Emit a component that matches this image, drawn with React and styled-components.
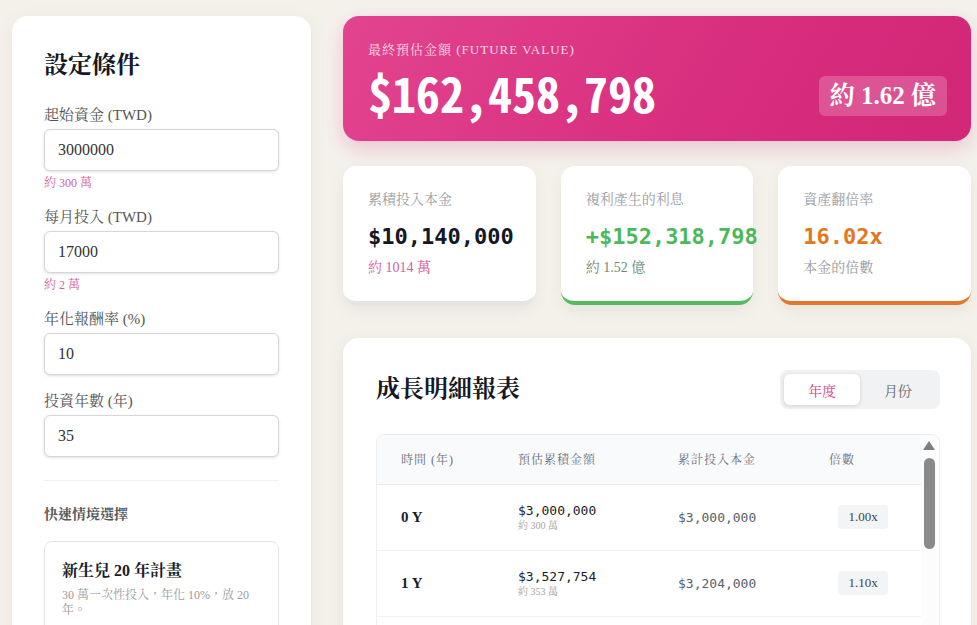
import styled, { createGlobalStyle } from "styled-components";

const GlobalStyle = createGlobalStyle`
  html, body {
    margin: 0;
    padding: 0;
    height: 100%;
    overflow: hidden;
    background: #f4f1eb;
  }
  body {
    font-family: "Liberation Serif", "Noto Serif CJK TC", "Noto Sans CJK TC", serif;
    color: #1f2330;
  }
  * { box-sizing: border-box; }
`;

const mono = `"DejaVu Sans Mono", "Liberation Mono", monospace`;

const fields = [
  { label: "起始資金 (TWD)", value: "3000000", hint: "約 300 萬" },
  { label: "每月投入 (TWD)", value: "17000", hint: "約 2 萬" },
  { label: "年化報酬率 (%)", value: "10" },
  { label: "投資年數 (年)", value: "35" },
];

const scenarios = [
  { title: "新生兒 20 年計畫", desc: "30 萬一次性投入，年化 10%，放 20 年。" },
  { title: "小資族定期定額", desc: "每月 1 萬，年化 8%，持續 30 年。" },
];

const stats = [
  { label: "累積投入本金", value: "$10,140,000", sub: "約 1014 萬", tone: "plain" },
  { label: "複利產生的利息", value: "+$152,318,798", sub: "約 1.52 億", tone: "green" },
  { label: "資產翻倍率", value: "16.02x", sub: "本金的倍數", tone: "orange" },
];

const tones = {
  plain: { value: "#141824", sub: "#d2609a", border: "#e4e4e6" },
  green: { value: "#4cb85c", sub: "#6b8a6e", border: "#55bb62" },
  orange: { value: "#e2771f", sub: "#9a9a9a", border: "#e4772a" },
};

// yearly rows: 3,000,000 start, 17,000 / month, 10% annual
const buildRows = () => {
  const rows = [];
  let value = 3000000;
  let principal = 3000000;
  const r = 0.1 / 12;
  for (let y = 0; y <= 35; y++) {
    if (y > 0) {
      for (let m = 0; m < 12; m++) {
        value = value * (1 + r) + 17000;
        principal += 17000;
      }
    }
    rows.push({ year: y, value, principal });
  }
  rows[1].value = 3527754;
  return rows;
};

const fmt = (n) => "$" + Math.round(n).toLocaleString("en-US");
const wan = (n) =>
  n >= 1e8 ? `約 ${(n / 1e8).toFixed(2)} 億` : `約 ${Math.round(n / 1e4)} 萬`;

const Page = styled.div`
  display: grid;
  grid-template-columns: 299px 1fr;
  gap: 32px;
  padding: 16px 6px 0 12px;
  height: 100vh;
  overflow: hidden;
`;

const Panel = styled.aside`
  background: #fff;
  border-radius: 16px;
  padding: 33px 32px 40px 32px;
  box-shadow: 0 4px 18px rgba(120, 100, 70, 0.08);
  min-height: 800px;
`;

const PanelTitle = styled.h2`
  margin: 0 0 24px;
  font-size: 24px;
  line-height: 32px;
  font-weight: 700;
  color: #151925;
`;

const Field = styled.div`
  display: flex;
  flex-direction: column;
  margin-bottom: 16px;
`;

const Label = styled.label`
  font-size: 15px;
  line-height: 20px;
  color: #555;
  margin-bottom: 4px;
`;

const Input = styled.input`
  height: 42px;
  border: 1px solid #d6d6d6;
  border-radius: 6px;
  padding: 0 13px;
  font-family: inherit;
  font-size: 16px;
  color: #333;
  background: #fff;
  box-shadow: 0 1px 3px rgba(0, 0, 0, 0.12);
  outline: none;
`;

const Hint = styled.div`
  margin-top: 4px;
  font-size: 12px;
  line-height: 16px;
  color: #d2609a;
`;

const Divider = styled.hr`
  border: none;
  border-top: 1px solid #efefef;
  margin: 23px 0 24px;
`;

const SectionLabel = styled.div`
  font-size: 14px;
  line-height: 20px;
  font-weight: 700;
  color: #555;
  margin-bottom: 16px;
`;

const ScenarioCard = styled.div`
  border: 1px solid #e6e6e6;
  border-radius: 8px;
  padding: 18px 17px 16px;
  margin-bottom: 12px;
  box-shadow: 0 1px 2px rgba(0, 0, 0, 0.04);
`;

const ScenarioTitle = styled.div`
  font-size: 16px;
  line-height: 22px;
  font-weight: 700;
  color: #1a1d28;
`;

const ScenarioDesc = styled.div`
  margin-top: 6px;
  font-size: 12px;
  line-height: 15px;
  color: #9a9a9a;
`;

const Main = styled.main`
  display: flex;
  flex-direction: column;
  min-width: 0;
`;

const Hero = styled.section`
  border-radius: 16px;
  padding: 25px 24px 22px 25px;
  background: linear-gradient(120deg, #e2448f 0%, #d92f80 55%, #d22677 100%);
  color: #fff;
  box-shadow: 0 8px 20px rgba(214, 44, 122, 0.22);
`;

const HeroLabel = styled.div`
  font-size: 13px;
  line-height: 18px;
  letter-spacing: 1px;
  color: rgba(255, 255, 255, 0.82);
  margin-bottom: 6px;
`;

const HeroRow = styled.div`
  display: flex;
  align-items: center;
  justify-content: space-between;
`;

const HeroValue = styled.div`
  font-family: "Noto Sans Mono CJK TC", "Noto Sans Mono CJK SC", "DejaVu Sans Mono", monospace;
  font-size: 48px;
  line-height: 54px;
  font-weight: 700;
`;

const HeroBadge = styled.div`
  margin-top: 8px;
  padding: 5px 11px;
  border-radius: 6px;
  background: rgba(255, 255, 255, 0.2);
  font-size: 25px;
  line-height: 30px;
  font-weight: 700;
`;

const StatGrid = styled.div`
  display: grid;
  grid-template-columns: repeat(3, 1fr);
  gap: 25px;
  margin-top: 25px;
`;

const StatCard = styled.div`
  background: #fff;
  border-radius: 14px;
  padding: 24px 25px 23px;
  border-bottom: 4px solid ${(p) => tones[p.$tone].border};
  box-shadow: 0 6px 14px rgba(120, 100, 70, 0.08);
  min-width: 0;
`;

const StatLabel = styled.div`
  font-size: 14px;
  line-height: 20px;
  color: #9a9da3;
`;

const StatValue = styled.div`
  margin-top: 12px;
  font-family: ${mono};
  font-size: 22px;
  line-height: 30px;
  font-weight: 700;
  white-space: nowrap;
  color: ${(p) => tones[p.$tone].value};
`;

const StatSub = styled.div`
  margin-top: 6px;
  font-size: 14px;
  line-height: 20px;
  color: ${(p) => tones[p.$tone].sub};
`;

const TableCard = styled.section`
  margin-top: 33px;
  background: #fff;
  border-radius: 16px;
  padding: 32px 31px 32px 33px;
  box-shadow: 0 4px 18px rgba(120, 100, 70, 0.08);
`;

const TableHead = styled.div`
  display: flex;
  align-items: center;
  justify-content: space-between;
  margin-bottom: 25px;
`;

const TableTitle = styled.h2`
  margin: 0;
  font-size: 24px;
  line-height: 39px;
  font-weight: 700;
  color: #151925;
`;

const Toggle = styled.div`
  display: flex;
  padding: 4px;
  border-radius: 8px;
  background: #f1f2f4;
`;

const ToggleBtn = styled.button`
  width: 76px;
  height: 31px;
  border: none;
  border-radius: 6px;
  font-family: inherit;
  font-size: 14px;
  background: ${(p) => (p.$active ? "#fff" : "transparent")};
  color: ${(p) => (p.$active ? "#d2447f" : "#666")};
  box-shadow: ${(p) => (p.$active ? "0 1px 4px rgba(0,0,0,0.14)" : "none")};
`;

const TableWrap = styled.div`
  display: flex;
  border: 1px solid #eceef1;
  border-radius: 8px;
  height: 486px;
  overflow: hidden;
`;

const TableScroll = styled.div`
  flex: 1;
  min-width: 0;
  overflow: hidden;
`;

const ScrollRail = styled.div`
  width: 16px;
  margin-right: 2px;
  flex-shrink: 0;
  display: flex;
  flex-direction: column;
  align-items: center;
  padding-top: 6px;
  background: #fcfcfc;
`;

const RailArrow = styled.div`
  width: 0;
  height: 0;
  border-left: 6px solid transparent;
  border-right: 6px solid transparent;
  border-bottom: 9px solid #7e7e7e;
`;

const RailThumb = styled.div`
  margin-top: 8px;
  width: 11px;
  height: 91px;
  border-radius: 6px;
  background: #8a8a8a;
`;

const Table = styled.table`
  width: 100%;
  border-collapse: collapse;
  table-layout: fixed;
`;

const Th = styled.th`
  height: 49px;
  padding: 0 0 0 24px;
  text-align: left;
  font-size: 12px;
  font-weight: 400;
  letter-spacing: 1px;
  color: #6b6f78;
  background: #f8fafc;
  border-bottom: 1px solid #e8ebef;
`;

const Td = styled.td`
  height: 66px;
  padding: 0 0 0 ${(p) => (p.$center ? 0 : 24)}px;
  text-align: ${(p) => (p.$center ? "center" : "left")};
  border-bottom: 1px solid #f1f2f4;
  vertical-align: middle;
`;

const YearText = styled.span`
  font-size: 15px;
  font-weight: 700;
  color: #1a1d28;
`;

const Amount = styled.div`
  font-family: ${mono};
  font-size: 13px;
  line-height: 17px;
  color: #1a1d28;
`;

const AmountSub = styled.div`
  font-size: 10px;
  line-height: 14px;
  color: #a5a5a5;
`;

const Principal = styled.span`
  font-family: ${mono};
  font-size: 13px;
  color: #5a5e66;
`;

const Multi = styled.span`
  display: inline-block;
  padding: 4px 10px;
  border-radius: 4px;
  background: #f2f4f6;
  font-size: 13px;
  color: #444;
`;

export default function App() {
  const rows = buildRows();
  return (
    <>
      <GlobalStyle />
      <Page>
        <Panel>
          <PanelTitle>設定條件</PanelTitle>
          {fields.map((f) => (
            <Field key={f.label}>
              <Label>{f.label}</Label>
              <Input defaultValue={f.value} />
              {f.hint && <Hint>{f.hint}</Hint>}
            </Field>
          ))}
          <Divider />
          <SectionLabel>快速情境選擇</SectionLabel>
          {scenarios.map((s) => (
            <ScenarioCard key={s.title}>
              <ScenarioTitle>{s.title}</ScenarioTitle>
              <ScenarioDesc>{s.desc}</ScenarioDesc>
            </ScenarioCard>
          ))}
        </Panel>

        <Main>
          <Hero>
            <HeroLabel>最終預估金額 (FUTURE VALUE)</HeroLabel>
            <HeroRow>
              <HeroValue>$162,458,798</HeroValue>
              <HeroBadge>約 1.62 億</HeroBadge>
            </HeroRow>
          </Hero>

          <StatGrid>
            {stats.map((s) => (
              <StatCard key={s.label} $tone={s.tone}>
                <StatLabel>{s.label}</StatLabel>
                <StatValue $tone={s.tone}>{s.value}</StatValue>
                <StatSub $tone={s.tone}>{s.sub}</StatSub>
              </StatCard>
            ))}
          </StatGrid>

          <TableCard>
            <TableHead>
              <TableTitle>成長明細報表</TableTitle>
              <Toggle>
                <ToggleBtn $active>年度</ToggleBtn>
                <ToggleBtn>月份</ToggleBtn>
              </Toggle>
            </TableHead>
            <TableWrap>
              <TableScroll>
                <Table>
                  <colgroup>
                    <col style={{ width: 117 }} />
                    <col style={{ width: 160 }} />
                    <col style={{ width: 151 }} />
                    <col />
                  </colgroup>
                  <thead>
                    <tr>
                      <Th>時間 (年)</Th>
                      <Th>預估累積金額</Th>
                      <Th>累計投入本金</Th>
                      <Th>倍數</Th>
                    </tr>
                  </thead>
                  <tbody>
                    {rows.slice(0, 8).map((r) => (
                      <tr key={r.year}>
                        <Td>
                          <YearText>{r.year} Y</YearText>
                        </Td>
                        <Td>
                          <Amount>{fmt(r.value)}</Amount>
                          <AmountSub>{wan(r.value)}</AmountSub>
                        </Td>
                        <Td>
                          <Principal>{fmt(r.principal)}</Principal>
                        </Td>
                        <Td $center>
                          <Multi>{(r.value / r.principal).toFixed(2)}x</Multi>
                        </Td>
                      </tr>
                    ))}
                  </tbody>
                </Table>
              </TableScroll>
              <ScrollRail>
                <RailArrow />
                <RailThumb />
              </ScrollRail>
            </TableWrap>
          </TableCard>
        </Main>
      </Page>
    </>
  );
}
